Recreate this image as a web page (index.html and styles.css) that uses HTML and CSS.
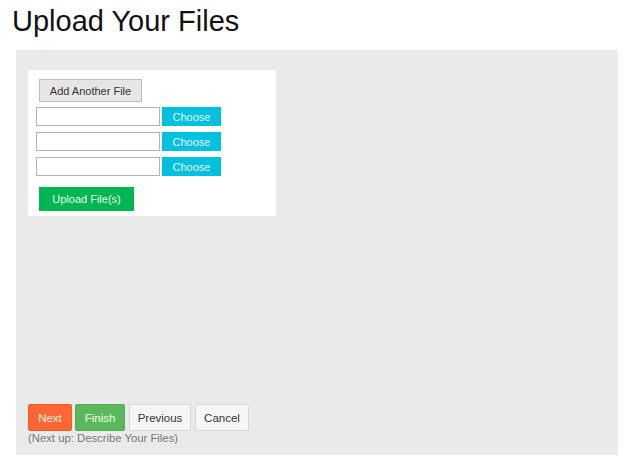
FILE: index.html
```html
<!DOCTYPE html>
<html lang="en">
<head>
  <meta charset="UTF-8" />
  <title>Upload Your Files</title>
  <link rel="stylesheet" href="styles.css">
</head>
<body>
  <h1 class="title">Upload Your Files</h1>
  <div class="panel">
    <div class="uploader">
      <button class="btn-add">Add Another File</button>
      <div class="file-row">
        <input type="text" class="file-name" />
        <button class="btn-choose">Choose</button>
      </div>
      <div class="file-row">
        <input type="text" class="file-name" />
        <button class="btn-choose">Choose</button>
      </div>
      <div class="file-row">
        <input type="text" class="file-name" />
        <button class="btn-choose">Choose</button>
      </div>
      <button class="btn-upload">Upload File(s)</button>
    </div>
    <div class="wizard-nav">
      <div class="nav-buttons">
        <button class="nav next">Next</button>
        <button class="nav finish">Finish</button>
        <button class="nav plain">Previous</button>
        <button class="nav plain">Cancel</button>
      </div>
      <div class="next-up">(Next up: Describe Your Files)</div>
    </div>
  </div>
</body>
</html>
```

FILE: styles.css
```css
html, body {
  margin: 0;
  background: #fff;
}
body {
  font-family: "Liberation Sans", Arial, sans-serif;
  color: #222;
}
.title {
  font-size: 29px;
  font-weight: normal;
  line-height: 32px;
  margin: 5px 0 13px 12px;
  color: #111;
}
.panel {
  margin: 0 17px 0 16px;
  height: 405px;
  box-sizing: border-box;
  background: #eaeaea;
  padding: 20px 12px 11px;
  display: flex;
  flex-direction: column;
  align-items: flex-start;
}
.uploader {
  width: 248px;
  box-sizing: border-box;
  background: #fff;
  padding: 9px 0 5px 8px;
}
button {
  font-family: "Liberation Sans", Arial, sans-serif;
  font-size: 11px;
  cursor: pointer;
  padding: 0;
}
.btn-add {
  display: block;
  margin-left: 3px;
  width: 103px;
  height: 23px;
  background: #e6e6e6;
  border: 1px solid #bdbdbd;
  color: #333;
}
.file-row {
  display: flex;
  gap: 2px;
  margin-top: 5px;
}
.file-row + .file-row {
  margin-top: 6px;
}
.file-name {
  width: 124px;
  height: 19px;
  box-sizing: border-box;
  border: 1px solid #b4b4b4;
  margin: 0;
  padding: 0 3px;
}
.btn-choose {
  width: 59px;
  height: 19px;
  border: none;
  background: #00c0e0;
  color: #e8f8ff;
}
.btn-upload {
  display: block;
  margin: 11px 0 0 3px;
  width: 95px;
  height: 24px;
  border: none;
  background: #00b652;
  color: #e6ffe6;
}
.wizard-nav {
  margin-top: auto;
}
.nav-buttons {
  display: flex;
  gap: 4px;
}
.nav {
  height: 27px;
  border-radius: 2px;
  font-size: 11.5px;
}
.nav.next {
  width: 44px;
  margin-right: -1px;
  background: #ff6633;
  border: 1px solid #f05a28;
  color: #fff5e0;
}
.nav.finish {
  width: 50px;
  background: #5cb85c;
  border: 1px solid #4cae4c;
  color: #f0ffe0;
}
.nav.plain {
  background: #f6f6f6;
  border: 1px solid #d8d8d8;
  color: #333;
}
.nav.plain:nth-child(3) {
  width: 62px;
}
.nav.plain:nth-child(4) {
  width: 54px;
}
.next-up {
  font-size: 11.3px;
  color: #777;
  margin-top: 1px;
}
```
